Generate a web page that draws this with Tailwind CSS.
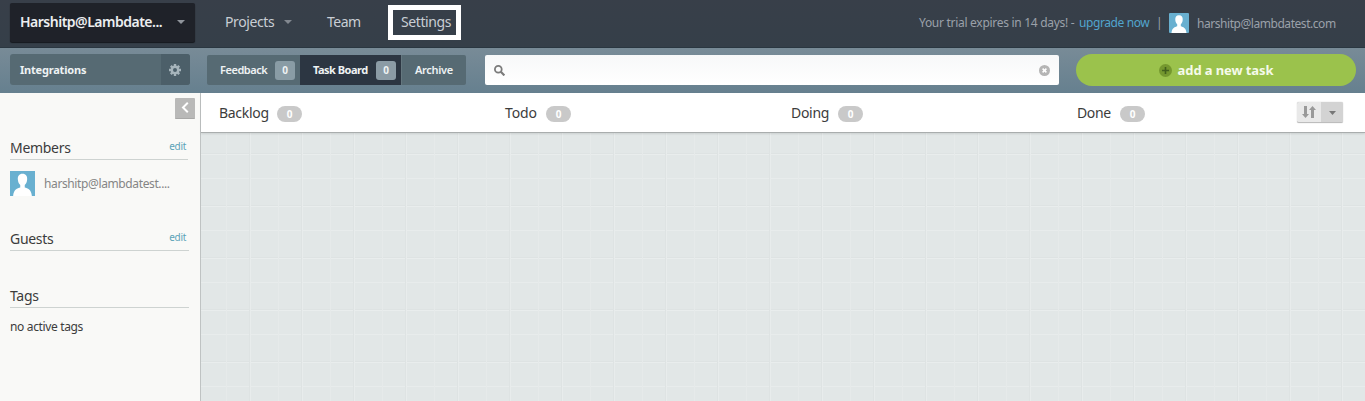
<!DOCTYPE html>
<html lang="en">
<head>
<meta charset="utf-8">
<title>Task Board</title>
<script src="https://cdn.jsdelivr.net/npm/@tailwindcss/browser@4"></script>
</head>
<body class="w-[1365px] h-[401px] overflow-hidden flex flex-col font-['Noto_Sans','Open_Sans',sans-serif] whitespace-nowrap bg-[#f9f9f7]">
<header class="h-12 shrink-0 flex items-start bg-linear-to-b from-[#383f49] to-[#353f49] border-b border-[#2a3741] text-[#c9ced4] text-[14px] leading-5">
  <button class="ml-[10px] mt-[3px] w-[185px] h-[39px] flex items-center justify-between pl-[10px] pr-[10px] pb-px rounded-[2px] bg-[#1f2229] text-[#eceef0] font-semibold shadow-[0_1px_1px_#15181d]">
    <span class="tracking-[-0.5px]">Harshitp@Lambdate...</span>
    <svg class="w-[8px] h-[4px]" viewBox="0 0 8 4"><path d="M0 0h8L4 4z" fill="#8f949b"/></svg>
  </button>
  <nav class="flex items-start">
    <a class="ml-[30px] mt-3 w-[67px] flex items-center justify-between"><span class="tracking-[-0.4px]">Projects</span><svg class="w-[8px] h-[4px]" viewBox="0 0 8 4"><path d="M0 0h8L4 4z" fill="#828890"/></svg></a>
    <a class="ml-[35px] mt-3 w-[33px] tracking-[-0.5px]">Team</a>
    <a class="ml-[28px] mt-[5px] w-[73px] h-[35px] border-5 border-white flex items-center pl-[8px] pb-px tracking-[-0.4px]">Settings</a>
  </nav>
  <div class="ml-auto mr-[29px] mt-[12px] flex items-center text-[12px] text-[#9ba1a9]">
    <span class="w-[160px] tracking-[-0.29px]">Your trial expires in 14 days! -</span><a class="w-[71px] tracking-[-0.4px] text-[#52a5ce]">upgrade now</a><span class="ml-[6px] w-[13px]">|</span>
    <svg class="w-5 h-5" viewBox="0 0 20 20"><rect width="20" height="20" rx="1" fill="#69b0d0"/><path d="M10 2.200c-2.700 0-4 2-3.700 4.700.2 2 .9 3.300 1.900 4.300v2C6 14 2.900 14.500 2.500 20h15c-.4-5.500-3.500-6-5.700-6.800v-2c1-1 1.700-2.300 1.900-4.300.3-2.700-1-4.700-3.700-4.700z" fill="#fff"/></svg>
    <span class="ml-[8px] w-[139px] mt-[2px] tracking-[-0.45px]">harshitp@lambdatest.com</span>
  </div>
</header>
<div class="h-[45px] shrink-0 flex items-start bg-linear-to-b from-[#788b97] to-[#66808f] text-[11px] font-bold text-[#eef2f3]">
  <div class="ml-[10px] mt-[6px] w-[180px] h-[31px] flex rounded-[3px] overflow-hidden bg-[#566a73]">
    <span class="w-[151px] pl-[10px] leading-[31px] tracking-[-0.2px]">Integrations</span>
    <button class="w-[29px] pr-px flex items-center justify-center bg-[#4c5f69]"><svg class="w-3 h-3" viewBox="0 0 12 12"><g stroke="#a6b4bb" stroke-width="2.400"><path d="M6 0v12M0 6h12M1.800 1.800l8.400 8.400M10.200 1.800l-8.400 8.400"/></g><circle cx="6" cy="6" r="4.400" fill="#a6b4bb"/><circle cx="6" cy="6" r="2" fill="#4c5f69"/></svg></button>
  </div>
  <div class="ml-[17px] mt-[7px] h-[30px] flex rounded-[2px] overflow-hidden bg-[#566a73] leading-[30px]">
    <a class="w-[93px] pl-[13px] pr-[5px] flex items-center justify-between"><span class="font-semibold tracking-[-0.45px]">Feedback</span><span class="w-5 h-[19px] rounded-[3px] bg-[#899ca5] text-[10px] leading-[19px] text-center">0</span></a>
    <a class="w-[101px] pl-[13px] pr-[5px] flex items-center justify-between bg-[#2c3642]"><span class="tracking-[-0.5px]">Task Board</span><span class="w-5 h-[19px] rounded-[3px] bg-[#8b9ba5] text-[10px] leading-[19px] text-center">0</span></a>
    <a class="w-[65px] pl-[13px] border-l border-[#65777f]"><span class="font-semibold tracking-[-0.3px]">Archive</span></a>
  </div>
  <label class="ml-[19px] mt-[7px] w-[574px] h-[30px] flex items-center justify-between pl-[9px] pr-[9px] rounded-[2px] bg-linear-to-b from-[#f7f8f9] to-white">
    <svg class="w-[11px] h-[11px]" viewBox="0 0 11 11" fill="none" stroke="#7b7b7b" stroke-width="1.800"><circle cx="4.300" cy="4.300" r="3.400"/><path d="M6.800 6.800l3.600 3.600" stroke-width="2.200"/></svg>
    <svg class="w-[11px] h-[11px]" viewBox="0 0 11 11"><circle cx="5.500" cy="5.500" r="5.500" fill="#b5b5b5"/><path d="M3.600 3.600l3.800 3.800M7.400 3.600L3.600 7.400" stroke="#fff" stroke-width="1.500"/></svg>
  </label>
  <button class="ml-[17px] mt-[6px] w-[280px] h-8 rounded-full bg-[#9bc24c] flex items-center justify-center text-[13px] text-[#f5faea]">
    <svg class="w-[13px] h-[13px] mr-[6px]" viewBox="0 0 13 13"><circle cx="6.500" cy="6.500" r="6.500" fill="#75982f"/><path d="M6.500 3v7M3 6.500h7" stroke="#42601d" stroke-width="1.600"/></svg>
    <span class="pt-px tracking-[-0.1px]">add a new task</span>
  </button>
</div>
<div class="flex-1 flex min-h-0">
  <aside class="w-[201px] shrink-0 border-r border-[#bfc3c3] bg-[#f9f9f7] text-[#3c3c3c] text-[14px] tracking-[-0.3px]">
    <button class="ml-[175px] mt-[5px] w-5 h-[21px] rounded-[1px] bg-[#b9b9b8] flex justify-center pt-[4px] border-b border-[#a8a8a7]"><svg class="w-[8px] h-[11px] mr-[1px]" viewBox="0 0 8 11"><path d="M6.800.8L2 5.500l4.800 4.700" fill="none" stroke="#fff" stroke-width="2"/></svg></button>
    <section class="ml-[10px] mt-[15px] w-[178px] h-[79px]">
      <div class="h-[26px] border-b border-[#ced3d1] flex justify-between leading-[28px]"><h2>Members</h2><a class="mr-[2px] text-[10px] leading-[25px] text-[#5ba3b8]">edit</a></div>
      <div class="flex mt-[11px]"><svg class="w-[25px] h-[25px]" viewBox="0 0 20 20"><rect width="20" height="20" fill="#69b0d0"/><path d="M10 2.200c-2.700 0-4 2-3.700 4.700.2 2 .9 3.300 1.900 4.300v2C6 14 2.900 14.500 2.500 20h15c-.4-5.500-3.500-6-5.700-6.800v-2c1-1 1.700-2.300 1.900-4.300.3-2.700-1-4.700-3.700-4.700z" fill="#fff"/></svg><span class="ml-[9px] text-[12px] leading-[26px] tracking-[-0.38px] text-[#858585]">harshitp@lambdatest....</span></div>
    </section>
    <section class="ml-[10px] mt-[12px] w-[179px]">
      <div class="h-[26px] border-b border-[#ced3d1] flex justify-between leading-[28px]"><h2>Guests</h2><a class="mr-[3px] text-[10px] leading-[25px] text-[#5ba3b8]">edit</a></div>
    </section>
    <section class="ml-[10px] mt-[31px] w-[179px]">
      <div class="h-[26px] border-b border-[#ced3d1] leading-[28px]"><h2>Tags</h2></div>
      <p class="mt-[9px] text-[12px] leading-5 tracking-[-0.35px]">no active tags</p>
    </section>
  </aside>
  <main class="flex-1 flex flex-col">
    <div class="h-10 shrink-0 flex bg-white border-b border-[#a9adad] shadow-[0_1px_2px_#0000001a] pl-[18px] text-[#3c3c3c] text-[14px] leading-10 z-10">
      <div class="w-[286px] flex items-center tracking-[-0.3px]"><h3 class="w-[58px] mt-px">Backlog</h3><span class="w-[25px] h-4 mt-[3px] rounded-full bg-[#c9c9c9] text-white text-[10px] font-bold leading-[17px] text-center">0</span></div>
      <div class="w-[286px] flex items-center tracking-[-0.1px]"><h3 class="w-[41px] mt-px">Todo</h3><span class="w-[25px] h-4 mt-[3px] rounded-full bg-[#c9c9c9] text-white text-[10px] font-bold leading-[17px] text-center">0</span></div>
      <div class="w-[286px] flex items-center tracking-[-0.3px]"><h3 class="w-[47px] mt-px">Doing</h3><span class="w-[25px] h-4 mt-[3px] rounded-full bg-[#c9c9c9] text-white text-[10px] font-bold leading-[17px] text-center">0</span></div>
      <div class="w-[220px] flex items-center tracking-[-0.4px]"><h3 class="w-[43px] mt-px">Done</h3><span class="w-[25px] h-4 mt-[3px] rounded-full bg-[#c9c9c9] text-white text-[10px] font-bold leading-[17px] text-center">0</span></div>
      <div class="mt-[9px] w-[46px] h-[21px] flex rounded-[2px] overflow-hidden border-b border-[#bdbdbd] bg-[#e9e9e9] shadow-[0_0_1px_#aaa]">
        <button class="w-[24px] flex items-center justify-center"><svg class="w-[14px] h-[12px]" viewBox="0 0 14 12" fill="#999"><path d="M2 0h3v8h2L3.500 12 0 8h2zM9 12h3V4h2L10.500 0 7 4h2z"/></svg></button>
        <button class="w-[22px] pt-px flex items-center justify-center bg-[#d3d3d3]"><svg class="w-[7px] h-[4px]" viewBox="0 0 7 4"><path d="M0 0h7L3.500 4z" fill="#777"/></svg></button>
      </div>
    </div>
    <div class="flex-1 bg-[#e2e7e7] bg-[linear-gradient(90deg,transparent_25px,#e6eaea_25px,#e6eaea_26px,transparent_26px,transparent_48px,#dee3e3_48px,#dee3e3_49px,#e8ecec_49px,#e8ecec_50px,transparent_50px),linear-gradient(180deg,transparent_20px,#dee3e3_20px,#dee3e3_21px,#e9eded_21px,#e9eded_22px,transparent_22px,transparent_45px,#e8ecec_45px,#e8ecec_46px,transparent_46px)] bg-[size:52px_52px]"></div>
  </main>
</div>
</body>
</html>
